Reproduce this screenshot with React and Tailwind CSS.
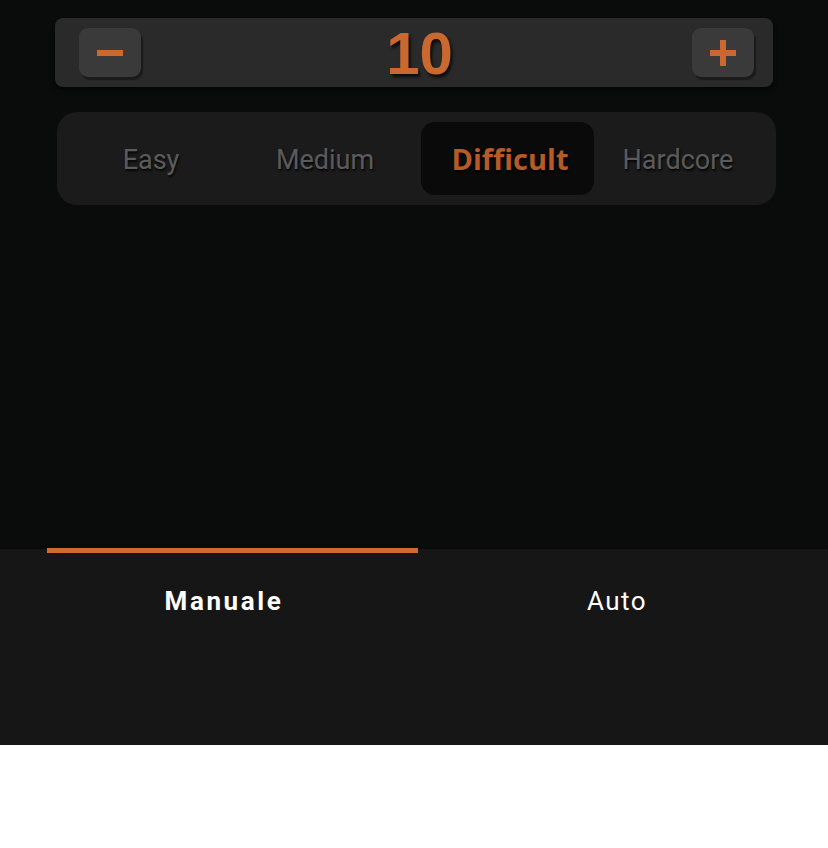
import React from "react";

export default function App() {
  const segs = [
    { s: "Easy", w: "w-[168px]" },
    { s: "Medium", w: "w-[180px] mr-[6px]" },
    { s: "Difficult", w: "w-[173px]" },
    { s: "Hardcore", w: "w-[168px]" },
  ];
  return (
    <div className="w-[828px] h-[848px] bg-white flex flex-col">
      <div className="h-[549px] bg-[#0a0b0b] flex flex-col pt-[18px]">
        <div className="ml-[55px] w-[718px] h-[69px] rounded-[8px] bg-[#2a2a2a] flex items-center justify-between pl-[24px] pr-[19px] shadow-[0_3px_4px_rgba(0,0,0,0.6)]">
          <div className="w-[62px] h-[49px] rounded-[9px] bg-[#3a3a3a] shadow-[2px_3px_1px_#1b1b1b] flex items-center justify-center">
            <div className="w-[26px] h-[6px] bg-[#c9682f]" />
          </div>
          <div
            className="text-[60px] leading-none font-bold text-[#c9682f] [text-shadow:2px_3px_3px_rgba(0,0,0,0.7)] pt-[2px] ml-[6px]"
            style={{ fontFamily: '"Liberation Sans", Arial, sans-serif' }}
          >
            10
          </div>
          <div className="w-[62px] h-[49px] rounded-[9px] bg-[#3a3a3a] shadow-[2px_3px_1px_#1b1b1b] flex items-center justify-center">
            <div className="relative w-[26px] h-[26px]">
              <div className="absolute left-0 top-[10px] w-[26px] h-[6px] bg-[#c9682f]" />
              <div className="absolute top-0 left-[10px] w-[6px] h-[26px] bg-[#c9682f]" />
            </div>
          </div>
        </div>
        <div className="ml-[57px] mt-[25px] w-[719px] h-[93px] rounded-[20px] bg-[#1b1b1b] flex items-stretch pl-[10px] py-[10px]">
          {segs.map(({ s, w }) => {
            const sel = s === "Difficult";
            return (
              <div
                key={s}
                className={
                  sel
                    ? "w-[173px] rounded-[14px] bg-[#0a0a0a] flex items-center justify-center pt-[1px] pl-[5px] text-[29px] font-bold text-[#b85a26] [text-shadow:1px_2px_2px_rgba(0,0,0,0.8)]"
                    : w + " flex items-center justify-center pt-[4px] text-[27px] text-[#5b5b5b] [text-shadow:1px_2px_2px_rgba(0,0,0,0.8)]"
                }
                style={{
                  fontFamily: sel
                    ? '"Open Sans", Roboto, sans-serif'
                    : 'Roboto, "Open Sans", sans-serif',
                }}
              >
                {s}
              </div>
            );
          })}
        </div>
      </div>
      <div
        className="h-[196px] bg-[#161616] flex flex-col"
        style={{ fontFamily: 'Roboto, "Open Sans", sans-serif' }}
      >
        <div className="ml-[47px] -mt-[1px] w-[371px] h-[5px] bg-[#d2692e]" />
        <div className="flex h-[96px] items-center">
          <div className="w-[448px] text-center text-[26px] font-bold text-white tracking-[2.6px]">
            Manuale
          </div>
          <div className="w-[338px] text-center text-[26px] text-white tracking-[1.4px]">
            Auto
          </div>
        </div>
      </div>
    </div>
  );
}
